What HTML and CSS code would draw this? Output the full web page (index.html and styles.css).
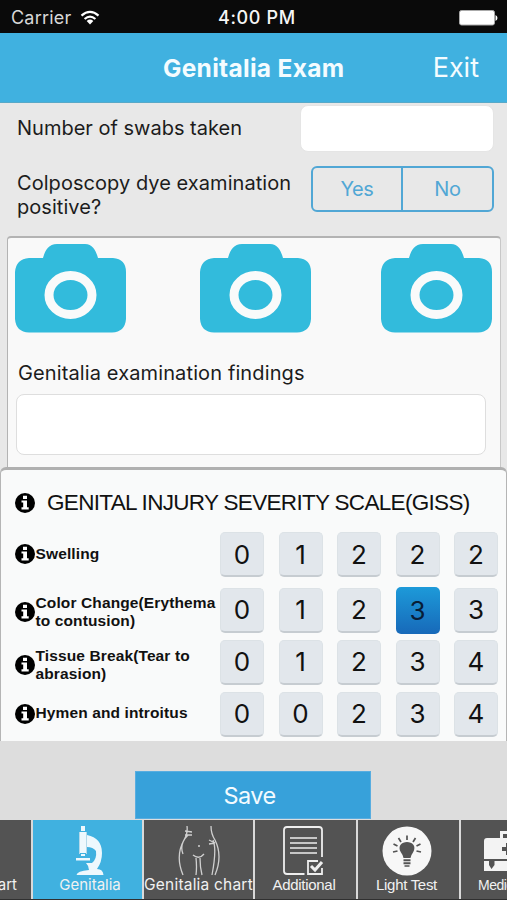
FILE: index.html
```html
<!DOCTYPE html>
<html lang="en">
  <head>
    <meta charset="UTF-8" />
    <meta name="viewport" content="width=device-width, initial-scale=1.0" />
    <title>Genitalia Exam</title>
    <link rel="stylesheet" href="styles.css">
  </head>
  <body>
    <!-- shared icons -->
    <svg class="sprite" aria-hidden="true">
      <symbol id="camera" viewBox="0 0 112 89">
        <path fill="#32bbdc" d="M14 14H28C30 7 33 0 42 0H70C78 0 81 7 83 14H98Q111 15 111 28V75Q110 88 97 88.500H14Q1 88 0 75V28Q1 15 14 14Z" />
        <ellipse cx="55.500" cy="51" rx="21.500" ry="19.500" fill="none" stroke="#f9fafa" stroke-width="9" />
      </symbol>
      <symbol id="info" viewBox="0 0 20 20">
        <circle cx="10" cy="10" r="10" />
        <path fill="#fff" d="M8 2.800h4v3.200H8zM6.500 7.400H12v6.800h1.700v2.200H6.500v-2.200h1.700V9.600H6.500z" />
      </symbol>
    </svg>

    <div class="status-bar">
      <span class="carrier">Carrier</span>
      <svg class="wifi" viewBox="0 0 20 15">
        <path d="M1.500 5.600Q10-2 18.500 5.600M4.600 9Q10 4.200 15.400 9" fill="none" stroke="#fff" stroke-width="2.200" />
        <path d="M6.700 11Q10 8.200 13.300 11L10 14.500Z" fill="#fff" />
      </svg>
      <span class="time">4:00 PM</span>
      <svg class="battery" viewBox="0 0 40 16">
        <rect x="1.500" y=".5" width="35" height="14.500" rx="2" fill="#fff" stroke="#aaa" />
        <path d="M37.500 5q2 1 2 3t-2 3z" fill="#fff" />
      </svg>
    </div>

    <header class="navbar">
      <h1>Genitalia Exam</h1>
      <a class="exit">Exit</a>
    </header>

    <main>
      <section class="questions">
        <div class="question">
          <label class="swabs-label">Number of swabs taken</label>
          <div class="input swabs"></div>
        </div>
        <div class="question dye">
          <label class="dye-label">Colposcopy dye examination<br>positive?</label>
          <div class="segmented">
            <span>Yes</span>
            <span>No</span>
          </div>
        </div>
      </section>

      <section class="findings">
        <div class="cameras">
          <svg><use href="#camera" /></svg>
          <svg><use href="#camera" /></svg>
          <svg><use href="#camera" /></svg>
        </div>
        <label class="findings-label">Genitalia examination findings</label>
        <div class="input notes"></div>
      </section>

      <section class="giss">
        <div class="giss-title">
          <svg class="info"><use href="#info" /></svg>
          <h2>GENITAL INJURY SEVERITY SCALE(GISS)</h2>
        </div>
        <div class="score-row first">
          <svg class="info"><use href="#info" /></svg>
          <span class="name">Swelling</span>
          <div class="scores"><b>0</b><b>1</b><b>2</b><b>2</b><b>2</b></div>
        </div>
        <div class="score-row second">
          <svg class="info"><use href="#info" /></svg>
          <span class="name">Color Change(Erythema<br>to contusion)</span>
          <div class="scores"><b>0</b><b>1</b><b>2</b><b class="selected">3</b><b>3</b></div>
        </div>
        <div class="score-row third">
          <svg class="info"><use href="#info" /></svg>
          <span class="name">Tissue Break(Tear to<br>abrasion)</span>
          <div class="scores"><b>0</b><b>1</b><b>2</b><b>3</b><b>4</b></div>
        </div>
        <div class="score-row fourth">
          <svg class="info"><use href="#info" /></svg>
          <span class="name">Hymen and introitus</span>
          <div class="scores"><b>0</b><b>0</b><b>2</b><b>3</b><b>4</b></div>
        </div>
      </section>
    </main>

    <div class="actions">
      <button class="save" type="button">Save</button>
    </div>

    <nav class="tabs">
      <div class="tab cut-left"><span>Chart</span></div>
      <div class="tab active">
        <svg viewBox="0 0 30 50">
          <path fill="#eef8fd" d="M6 0h4v5H6zM5 6h6v21H5zM6 28h4v2H6zM1 32h14v2.500H1zM12 9Q27 12 27 27Q27 36 22 43Q28 43 28.500 49H1.500Q2 45 14 44Q14 40 11 37H17Q22 33 21 25Q18 21 12 21Z" />
          <path fill="none" stroke="#b5d9ea" d="M11.500 6v22M4.500 6v22" />
        </svg>
        <span>Genitalia</span>
      </div>
      <div class="tab">
        <svg viewBox="0 0 42 50" fill="none" stroke="#d0d0d0" stroke-width="1.300">
          <path d="M9 0Q10 8 6 14Q-3 30 5 49M10 9Q1 18 5 28M7 5l7 1M7 9l7 0M33 0Q33 8 37 14Q45 30 37 49M35 14Q39 23 34 49M31 14l6 3M31 18l6-1M15 29q6 5 11-1M18 32q1 9 0 17M22 32q0 9 2 17" />
          <path d="M20 20h2" />
        </svg>
        <span class="wide">Genitalia chart</span>
      </div>
      <div class="tab helvetica additional">
        <svg viewBox="0 0 42 50" fill="none" stroke="#eee" stroke-width="1.800">
          <path d="M21.500 48H4Q1 48 1 45V4Q1 1 4 1H36Q39 1 39 4V31" />
          <path d="M7 12h27M7 17h27M7 22h27M7 27h27" stroke-width="1.600" />
          <path d="M35 35H25V48H39V42" />
          <path d="M28 40l4 4 7-8" stroke-width="3" />
        </svg>
        <span>Additional</span>
      </div>
      <div class="tab helvetica light-test">
        <svg viewBox="0 0 50 50">
          <circle cx="25" cy="25" r="24.500" fill="#f7f7f7" />
          <path fill="#535353" d="M21.500 32Q21 29 19 26.500C15 20 20 16 25 16S35 20 31 26.500Q29 29 28.500 32ZM21.500 33.300h7v2h-7zM21.500 36.300h7v2h-7zM22.500 39.300h5v1.500h-5z" />
          <path stroke="#535353" stroke-width="1.700" d="M25 9.500v4.500M16.500 12l2.500 4M33.500 12l-2.500 4M11.500 18l4 2M38.500 18l-4 2M11 26l4.500-1M39 26l-4.500-1" />
        </svg>
        <span>Light Test</span>
      </div>
      <div class="tab helvetica cut-right">
        <svg viewBox="0 0 50 50">
          <path fill="none" stroke="#f3f3f3" stroke-width="3" d="M17.500 14V6.500H33V14" />
          <path fill="#f3f3f3" d="M3 12H48Q50 12 50 14V33H0V15Q0 12 3 12ZM0 35h5v4l2.500 4 3-4v-4H50V45H0z" />
          <path fill="#535353" d="M22 17h4v4h4v4h-4v4h-4v-4h-4v-4h4zM6 35h4v3H6z" />
        </svg>
        <span>Medical</span>
      </div>
    </nav>
  </body>
</html>
```
FILE: styles.css
```css
* {
  box-sizing: border-box;
}

:root {
  --sans: Inter, "Liberation Sans", sans-serif;
  --helvetica: "Liberation Sans", Arial, sans-serif;
  --blue: #40b1e0;
  --line: #51a7d5;
}

body {
  margin: 0;
  width: 507px;
  height: 900px;
  display: flex;
  flex-direction: column;
  overflow: hidden;
  background: #ddd;
  color: #1c1c1c;
  font-family: var(--sans);
}

svg {
  display: block;
  flex: none;
}

h1,
h2 {
  margin: 0;
}

.sprite {
  display: none;
}

.status-bar {
  flex: none;
  height: 33px;
  padding: 2px 9px 0 11px;
  display: grid;
  grid-template-columns: 69px 138px 1fr 40px;
  align-items: center;
  background: #0a0a0a;
  color: #f6f6f6;
  font-size: 18px;
  white-space: nowrap;
}

.carrier {
  color: #d8d8d8;
  letter-spacing: 0.2px;
}

.wifi {
  width: 20px;
  height: 15px;
}

.time {
  font-weight: 500;
  letter-spacing: 0.65px;
}

.battery {
  width: 40px;
  height: 16px;
}

.navbar {
  flex: none;
  height: 70px;
  padding-right: 28px;
  display: grid;
  grid-template-columns: 163px 1fr auto;
  align-items: center;
  background: var(--blue);
  border-bottom: 1px solid #58a9c8;
  color: #f4fcff;
}

.navbar h1 {
  grid-column: 2;
  font-size: 24.5px;
  font-weight: 700;
  letter-spacing: 0.3px;
}

.exit {
  font-size: 27px;
}

.questions {
  height: 133px;
  padding: 2px 13px 0 17px;
  background: #e8e8e8;
  font-size: 20px;
}

.question {
  display: flex;
  justify-content: space-between;
}

.swabs-label {
  padding-top: 11px;
  line-height: 24px;
}

.input {
  background: #fff;
  border: 1px solid #dedede;
  border-radius: 8px;
}

.swabs {
  width: 194px;
  height: 47px;
  border-color: #e5e5e5;
}

.dye {
  padding-top: 14px;
}

.dye-label {
  padding-top: 5px;
  line-height: 24px;
  letter-spacing: 0.05px;
}

.segmented {
  width: 183px;
  height: 46px;
  display: grid;
  grid-template-columns: 88px 1fr;
  border: 2px solid var(--line);
  border-radius: 6px;
  color: var(--line);
  letter-spacing: -0.4px;
}

.segmented span {
  display: flex;
  align-items: center;
  justify-content: center;
}

.segmented span + span {
  border-left: 2px solid var(--line);
}

main {
  background: #e8e8e8;
}

.findings {
  height: 231px;
  margin: 0 6px 0 7px;
  padding: 6px 8px 0 7px;
  background: #f9f9f9;
  border: 1px solid #b3b3b3;
  border-top-width: 2px;
  border-right-color: #c8c8c8;
  border-bottom: 0;
  border-radius: 4px 4px 0 0;
}

.cameras {
  display: grid;
  grid-template-columns: 185px 180.5px 112px;
}

.cameras svg {
  width: 112px;
  height: 89px;
}

.findings-label {
  display: block;
  margin: 28px 0 9px 3px;
  font-size: 20px;
  line-height: 24px;
  letter-spacing: 0.12px;
}

.notes {
  width: 470px;
  height: 61px;
  margin-left: 1px;
}

.giss {
  height: 274px;
  border: 1px solid #b5b5b5;
  border-top: 3px solid #b0b0b0;
  border-bottom: 0;
  border-radius: 6px 6px 0 0;
  padding-left: 13.5px;
  background: #f9fafa;
  font-family: var(--helvetica);
  color: #111;
}

.giss-title {
  height: 62px;
  padding-top: 3px;
  display: flex;
  align-items: center;
  gap: 12.5px;
}

.giss-title h2 {
  font-size: 22.5px;
  font-weight: 400;
  letter-spacing: -0.68px;
  white-space: nowrap;
}

.info {
  width: 20px;
  height: 20px;
}

.score-row {
  height: 52px;
  display: grid;
  grid-template-columns: 21px 184.5px 1fr;
  align-items: center;
}

.score-row.first {
  height: 44px;
}

.first .info,
.first .name {
  margin-bottom: 2px;
}

.score-row.second {
  margin-top: 8px;
}

.second .info,
.second .name {
  margin-top: 3px;
}

.third .info,
.third .name {
  margin-top: 5px;
}

.fourth .name {
  margin-bottom: 2px;
}

.name {
  font-size: 15.5px;
  font-weight: 700;
  line-height: 18px;
  letter-spacing: 0.12px;
  white-space: nowrap;
}

.scores {
  display: grid;
  grid-template-columns: repeat(5, 44px);
  gap: 14.5px;
}

.scores b {
  height: 45px;
  display: flex;
  align-items: center;
  justify-content: center;
  border: 1px solid #dce2e6;
  border-bottom: 2px solid #c6ccd1;
  border-radius: 5px;
  background: #e2e7ec;
  font-family: var(--sans);
  font-size: 26px;
  font-weight: 400;
}

.scores .selected {
  height: 47px;
  margin: -1px 0;
  border: 0;
  background: linear-gradient(#1d9ad9, #1769b9);
  color: #081d36;
}

.actions {
  flex: none;
  height: 79px;
  padding-top: 30px;
}

.save {
  display: block;
  width: 236px;
  height: 48px;
  margin-left: 135px;
  padding: 0 7px 0 0;
  border: 1px solid #58ade0;
  background: #37a1da;
  color: #f3fbff;
  font: 23.5px var(--sans);
  letter-spacing: -0.6px;
}

.tabs {
  flex: none;
  height: 80px;
  display: grid;
  grid-template-columns: 31px 109px 109px 101px 101px 46px;
  gap: 2px;
  background: #d9d9d9;
  border-bottom: 1px solid #303030;
}

.tab {
  display: flex;
  flex-direction: column;
  align-items: center;
  padding-top: 6px;
  overflow: hidden;
  background: #535353;
  color: #f1f1f1;
  font-size: 15px;
  line-height: 18px;
  white-space: nowrap;
}

.tab svg {
  height: 50px;
}

.tab.active {
  padding-left: 5px;
  background: var(--blue);
}

.tab .wide {
  font-size: 15.5px;
  letter-spacing: 0.2px;
}

.tab.helvetica {
  font-family: var(--helvetica);
}

.tab.additional {
  letter-spacing: -0.3px;
  padding-right: 3px;
}

.tab.light-test {
  letter-spacing: -0.3px;
  padding-right: 4px;
}

.cut-left {
  align-items: flex-end;
  padding: 56px 14px 0 0;
}

.tab.cut-right {
  align-items: flex-start;
  padding-left: 17px;
  font-size: 14px;
  letter-spacing: -0.5px;
}

.cut-right svg {
  margin-left: 6px;
}
```
